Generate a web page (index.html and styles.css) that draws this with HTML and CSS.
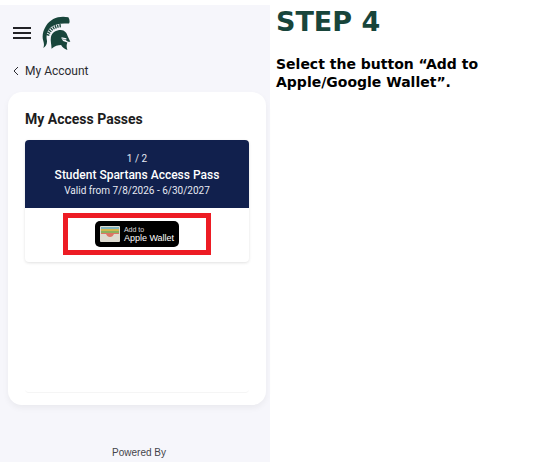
FILE: index.html
```html
<!DOCTYPE html>
<html lang="en">
<head>
  <meta charset="UTF-8">
  <meta name="viewport" content="width=device-width, initial-scale=1">
  <title>Step 4 - Add to Wallet</title>
  <link rel="stylesheet" href="styles.css">
</head>
<body>
  <main class="guide">
    <section class="phone">
      <header class="topbar">
        <button class="menu" aria-label="Menu"><span></span><span></span><span></span></button>
        <svg class="logo" viewBox="0 0 88 104" aria-label="Spartans">
          <path d="M80 3 C52 -3 26 7 12 29 C3 43 0 59 3 71 C5 80 8 85 4 96 C12 91 16 83 15 73 C11 55 17 40 30 31 C43 22 60 20 82 22 C85 17 84 9 80 3 Z"/>
          <path d="M29 98 C29 85 25 74 27 63 C30 48 43 41 57 41 C69 42 75 49 78 60 L86 77 C80 78 75 75 71 71 L60 69 L64 75 L77 79 C74 86 74 92 77 102 C67 98 61 93 58 87 C49 87 38 90 29 98 Z"/>
          <path class="plume" d="M17 58 C22 42 36 30 58 28"/>
          <path class="eye" d="M59 65 L74 68"/>
        </svg>
      </header>
      <a class="back" href="#">
        <svg viewBox="0 0 6 10" aria-hidden="true"><path d="M5 1 L1 5 L5 9"/></svg>
        My Account
      </a>
      <div class="card">
        <h2>My Access Passes</h2>
        <div class="pass">
          <div class="pass-info">
            <p>1 / 2</p>
            <h3>Student Spartans Access Pass</h3>
            <p class="dates">Valid from 7/8/2026 - 6/30/2027</p>
          </div>
          <div class="pass-action">
            <div class="highlight">
              <button class="wallet">
                <svg viewBox="0 0 20 16" aria-hidden="true">
                  <rect width="20" height="16" rx="1" fill="#dedbd0"/>
                  <rect x="1" y="1" width="18" height="2" fill="#7fb3bd"/>
                  <rect x="1" y="3" width="18" height="2" fill="#d3b64e"/>
                  <rect x="1" y="5" width="18" height="2" fill="#8db05c"/>
                  <path d="M1 7 H19 V8 H14 C13 10 12 11 10 11 C8 11 7 10 6 8 H1 Z" fill="#dc7565"/>
                </svg>
                <span><small>Add to</small>Apple Wallet</span>
              </button>
            </div>
          </div>
        </div>
        <div class="card-end"></div>
      </div>
      <footer>Powered By</footer>
    </section>
    <section class="step">
      <h1>STEP 4</h1>
      <p>Select the button “Add to Apple/Google Wallet”.</p>
    </section>
  </main>
</body>
</html>
```
FILE: styles.css
```css
* {
  box-sizing: border-box;
}
body {
  margin: 0;
  background: #fff;
  font-family: Roboto, sans-serif;
  color: #1c1c20;
}
h1, h2, h3, p {
  margin: 0;
}
button {
  padding: 0;
  border: none;
  cursor: pointer;
}
.guide {
  display: grid;
  grid-template-columns: 1fr 1fr;
  padding-top: 5px;
}
.phone {
  background: #f6f6fb;
  padding: 8px 4px 0 8px;
}
.topbar {
  display: flex;
  align-items: center;
  gap: 11px;
  padding-left: 5px;
  height: 40px;
}
.menu {
  display: flex;
  flex-direction: column;
  gap: 3px;
  width: 18px;
  background: none;
}
.menu span {
  width: 100%;
  height: 2px;
  background: #222226;
}
.logo {
  width: 29px;
  height: 35px;
  fill: #18453b;
}
.plume {
  fill: none;
  stroke: #18453b;
  stroke-width: 10;
  stroke-dasharray: 4 3;
}
.eye {
  stroke: #f6f6fb;
  stroke-width: 4;
}
.back {
  display: flex;
  align-items: center;
  gap: 6px;
  margin-top: 8px;
  padding-left: 5px;
  font-size: 12px;
  line-height: 20px;
  color: #2b2b30;
  text-decoration: none;
}
.back svg {
  width: 6px;
  height: 10px;
  fill: none;
  stroke: #2b2b30;
}
.card {
  margin-top: 11px;
  padding: 17px 17px 12px;
  background: #fff;
  border-radius: 14px;
  box-shadow: 0 3px 6px rgba(0, 0, 0, 0.05);
}
.card h2 {
  font-size: 14px;
  line-height: 20px;
  font-weight: 700;
}
.pass {
  margin-top: 11px;
  border-radius: 4px;
  overflow: hidden;
  box-shadow: 0 1px 3px rgba(0, 0, 0, 0.12);
  text-align: center;
}
.pass-info {
  padding: 11px 8px 9px;
  background: #11204d;
  color: #e6e9f2;
  font-size: 10px;
  line-height: 16px;
}
.pass-info h3 {
  color: #fff;
  font-size: 12px;
  line-height: 16px;
  font-weight: 500;
}
.pass-action {
  display: flex;
  justify-content: center;
  padding: 5px 0 7px;
}
.highlight {
  display: flex;
  justify-content: center;
  width: 148px;
  padding: 3px 0;
  border: 5px solid #ed1c24;
}
.wallet {
  display: flex;
  align-items: center;
  gap: 4px;
  height: 26px;
  padding: 0 5px;
  border-radius: 5px;
  background: #000;
  color: #fff;
  font-family: "Liberation Sans", sans-serif;
  font-size: 9px;
  line-height: 9px;
  text-align: left;
}
.wallet svg {
  width: 20px;
  height: 16px;
}
.wallet small {
  display: block;
  color: #ddd;
  font-size: 7px;
  line-height: 8px;
}
.card-end {
  height: 131px;
  border-bottom: 1px solid #f5f5f5;
  border-radius: 4px;
}
footer {
  padding: 38px 0 0 4px;
  font-family: "Liberation Sans", sans-serif;
  font-size: 10px;
  line-height: 19px;
  color: #44444a;
  text-align: center;
}
.step {
  padding: 0 24px 0 6px;
  font-family: "DejaVu Sans", sans-serif;
  font-weight: 700;
}
.step h1 {
  color: #18453b;
  font-size: 27px;
  line-height: 34px;
}
.step p {
  margin-top: 16px;
  color: #000;
  font-size: 14px;
  line-height: 18px;
}
```
